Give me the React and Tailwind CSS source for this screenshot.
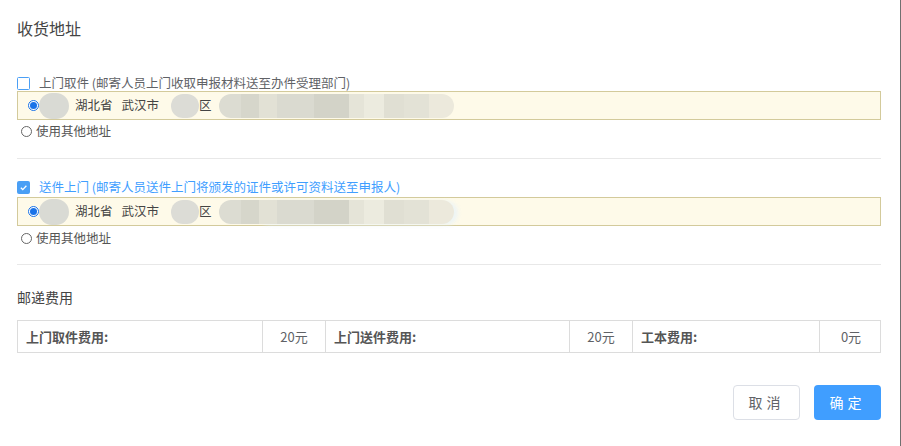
import React from "react";

const addrBlobs = [
  ["22px", "#dcdcd2"],
  ["18px", "#d6d6cb"],
  ["18px", "#e2e1d5"],
  ["37px", "#dadad0"],
  ["35px", "#d3d3c8"],
  ["15px", "#e5e4d8"],
  ["20px", "#ecebdf"],
  ["20px", "#e0dfd3"],
  ["25px", "#e3e2d6"],
  ["25px", "#ece9dc"],
];

function Radio({ checked }) {
  if (checked) {
    return (
      <span className="flex h-[11px] w-[11px] items-center justify-center rounded-full border border-[#1a73e8] bg-white">
        <span className="h-[7px] w-[7px] rounded-full bg-[#1a73e8]" />
      </span>
    );
  }
  return <span className="h-[11px] w-[11px] rounded-full border border-[#666] bg-white" />;
}

function Checkbox({ checked }) {
  if (checked) {
    return (
      <span className="flex h-[13px] w-[13px] items-center justify-center rounded-[2px] bg-[#4a9ff5]">
        <svg width="9" height="9" viewBox="0 0 10 10" fill="none">
          <path d="M2 5.2 4.2 7.3 8.2 3" stroke="#fff" strokeWidth="1.4" />
        </svg>
      </span>
    );
  }
  return (
    <svg width="13" height="13" viewBox="0 0 13 13" className="shrink-0">
      <rect x="0.5" y="0.5" width="12" height="12" rx="1" fill="#fff" stroke="#4a9ff5" />
    </svg>
  );
}

// 地址框，隐私部分用模糊块遮挡
function AddressBox({ haze }) {
  return (
    <div className="relative flex h-[29px] items-center border border-[#d3ca9b] bg-[#fefae9] pl-[10px] text-[12.5px] text-[#444]">
      {haze && (
        <span className="absolute left-[240px] top-[3px] h-[24px] w-[200px] rounded-full bg-[#e6f2fa] opacity-70 blur-[2px]" />
      )}
      <Radio checked />
      <span className="relative h-[26px] w-[30px] rounded-full bg-[#d9dad4]" />
      <span className="relative ml-[6px]">湖北省</span>
      <span className="relative ml-[9px]">武汉市</span>
      <span className="relative ml-[12px] h-[24px] w-[28px] rounded-full bg-[#dcdcd6]" />
      <span className="relative">区</span>
      <span className="relative ml-[7px] flex h-[24px] overflow-hidden rounded-full">
        {addrBlobs.map(([w, c], i) => (
          <span key={i} className="h-full" style={{ width: w, background: c }} />
        ))}
      </span>
    </div>
  );
}

export default function App() {
  return (
    <div className="h-[446px] w-[901px] border-r border-[#707070] bg-white font-['Noto_Sans_CJK_SC','Noto_Sans',sans-serif]">
      <div className="ml-[17px] w-[864px] pt-[16px]">
        <div className="h-[24px] text-[16px] leading-[24px] text-[#444]">收货地址</div>

        {/* 上门取件 */}
        <div className="mt-[35px] flex h-[16px] items-center gap-[9px] text-[12.5px] leading-[16px] text-[#606266]">
          <Checkbox />
          <span>上门取件 (邮寄人员上门收取申报材料送至办件受理部门)</span>
        </div>
        <AddressBox />
        <div className="mt-[3px] flex h-[16px] items-center gap-[4px] pl-[4px] text-[12.5px] leading-[16px] text-[#555]">
          <Radio />
          <span>使用其他地址</span>
        </div>
        <div className="mt-[19px] h-px bg-[#e8e8e8]" />

        {/* 送件上门 */}
        <div className="mt-[20px] flex h-[16px] items-center gap-[9px] text-[12.5px] leading-[16px] text-[#409eff]">
          <Checkbox checked />
          <span>送件上门 (邮寄人员送件上门将颁发的证件或许可资料送至申报人)</span>
        </div>
        <div className="mt-[2px]">
          <AddressBox haze />
        </div>
        <div className="mt-[4px] flex h-[16px] items-center gap-[4px] pl-[4px] text-[12.5px] leading-[16px] text-[#555]">
          <Radio />
          <span>使用其他地址</span>
        </div>
        <div className="mt-[18px] h-px bg-[#e8e8e8]" />

        {/* 邮递费用 */}
        <div className="mt-[22px] h-[20px] text-[14px] leading-[20px] text-[#444]">邮递费用</div>
        <div className="mt-[13px] grid h-[33px] grid-cols-[244px_63px_244px_63px_187px_63px] border border-[#dcdcdc] text-[13px]">
          <div className="flex items-center pl-[8px] font-bold text-[#555]">上门取件费用:</div>
          <div className="flex items-center justify-center border-l border-[#dcdcdc] text-[#606266]">20元</div>
          <div className="flex items-center border-l border-[#dcdcdc] pl-[8px] font-bold text-[#555]">上门送件费用:</div>
          <div className="flex items-center justify-center border-l border-[#dcdcdc] text-[#606266]">20元</div>
          <div className="flex items-center border-l border-[#dcdcdc] pl-[8px] font-bold text-[#555]">工本费用:</div>
          <div className="flex items-center justify-center border-l border-[#dcdcdc] text-[#606266]">0元</div>
        </div>

        <div className="mt-[32px] flex justify-end gap-[14px]">
          <button className="h-[35px] w-[67px] rounded-[4px] border border-[#dcdfe6] bg-white text-[14px] tracking-[4px] text-[#606266]">
            取消
          </button>
          <button className="h-[35px] w-[67px] rounded-[4px] bg-[#409eff] text-[14px] tracking-[4px] text-white">
            确定
          </button>
        </div>
      </div>
    </div>
  );
}
